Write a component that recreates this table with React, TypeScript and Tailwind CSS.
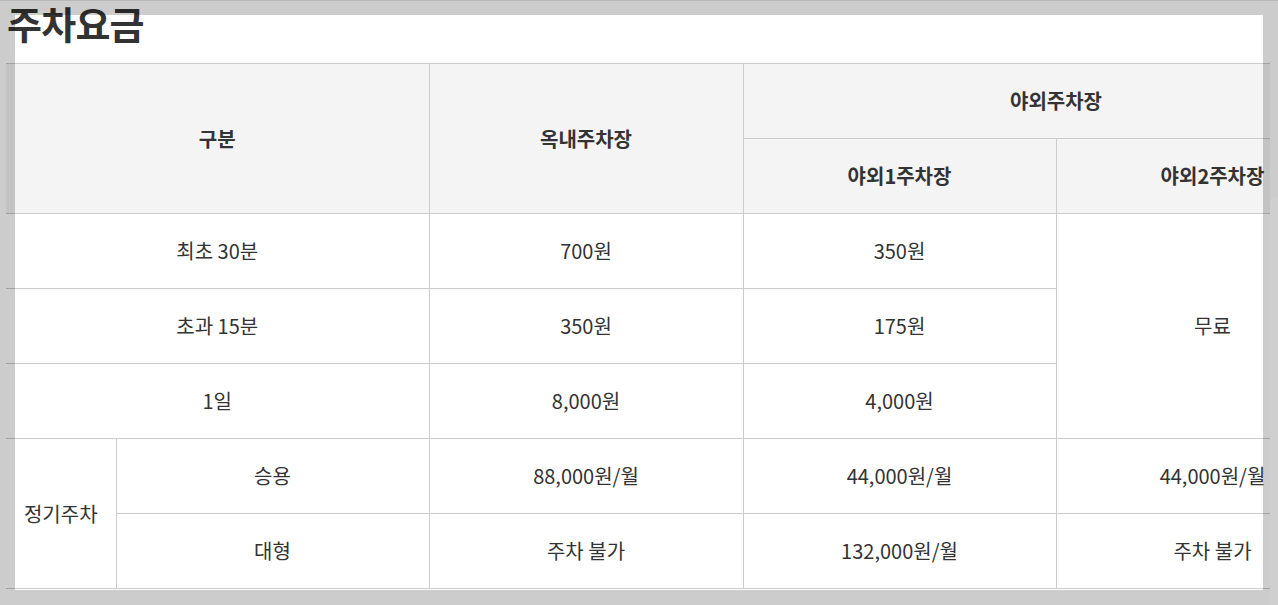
import React from "react";

const th = "border border-[#cccccc] bg-[#f4f4f4] font-bold text-center align-middle";
const td = "border border-[#cccccc] text-center align-middle font-normal";

export default function App() {
  return (
    <div
      className="relative w-[1278px] h-[605px] overflow-hidden bg-white text-[#333333]"
      style={{ fontFamily: '"Noto Sans CJK KR", "Noto Sans", sans-serif' }}
    >
      <div className="pl-[7px] w-[1270px] overflow-hidden">
        <h1 className="h-[63px] text-[38px] leading-[45px] font-bold tracking-[-0.02em]">주차요금</h1>
        <table className="table-fixed border-collapse w-[1363px] text-[20px] -ml-px">
          <colgroup>
            <col className="w-[110px]" />
            <col className="w-[313px]" />
            <col className="w-[314px]" />
            <col className="w-[313px]" />
            <col className="w-[313px]" />
          </colgroup>
          <thead>
            <tr className="h-[75px]">
              <th colSpan={2} rowSpan={2} className={th + " border-l-0"}>구분</th>
              <th rowSpan={2} className={th}>옥내주차장</th>
              <th colSpan={2} className={th}>야외주차장</th>
            </tr>
            <tr className="h-[75px]">
              <th className={th}>야외1주차장</th>
              <th className={th}>야외2주차장</th>
            </tr>
          </thead>
          <tbody>
            <tr className="h-[75px]">
              <td colSpan={2} className={td + " border-l-0"}>최초 30분</td>
              <td className={td}>700원</td>
              <td className={td}>350원</td>
              <td rowSpan={3} className={td}>무료</td>
            </tr>
            <tr className="h-[75px]">
              <td colSpan={2} className={td + " border-l-0"}>초과 15분</td>
              <td className={td}>350원</td>
              <td className={td}>175원</td>
            </tr>
            <tr className="h-[75px]">
              <td colSpan={2} className={td + " border-l-0"}>1일</td>
              <td className={td}>8,000원</td>
              <td className={td}>4,000원</td>
            </tr>
            <tr className="h-[75px]">
              <td rowSpan={2} className={td + " border-l-0"}>정기주차</td>
              <td className={td}>승용</td>
              <td className={td}>88,000원/월</td>
              <td className={td}>44,000원/월</td>
              <td className={td}>44,000원/월</td>
            </tr>
            <tr className="h-[75px]">
              <td className={td}>대형</td>
              <td className={td}>주차 불가</td>
              <td className={td}>132,000원/월</td>
              <td className={td}>주차 불가</td>
            </tr>
          </tbody>
        </table>
      </div>

      {/* frame overlay */}
      <div className="absolute left-0 top-0 w-[1278px] h-[15px] bg-black/20 border-t border-black/10" />
      <div className="absolute left-0 top-[590px] w-[1278px] h-[15px] bg-black/20" />
      <div className="absolute left-0 top-[15px] w-[15px] h-[575px] bg-black/20" />
      <div className="absolute left-[1263px] top-[15px] w-[15px] h-[575px] bg-black/20" />

      {/* scrollbar thumb */}
      <div className="absolute left-[1270px] top-[197px] w-[8px] h-[420px] rounded-tl-[6px] bg-[#cfcfcf]" />
    </div>
  );
}
